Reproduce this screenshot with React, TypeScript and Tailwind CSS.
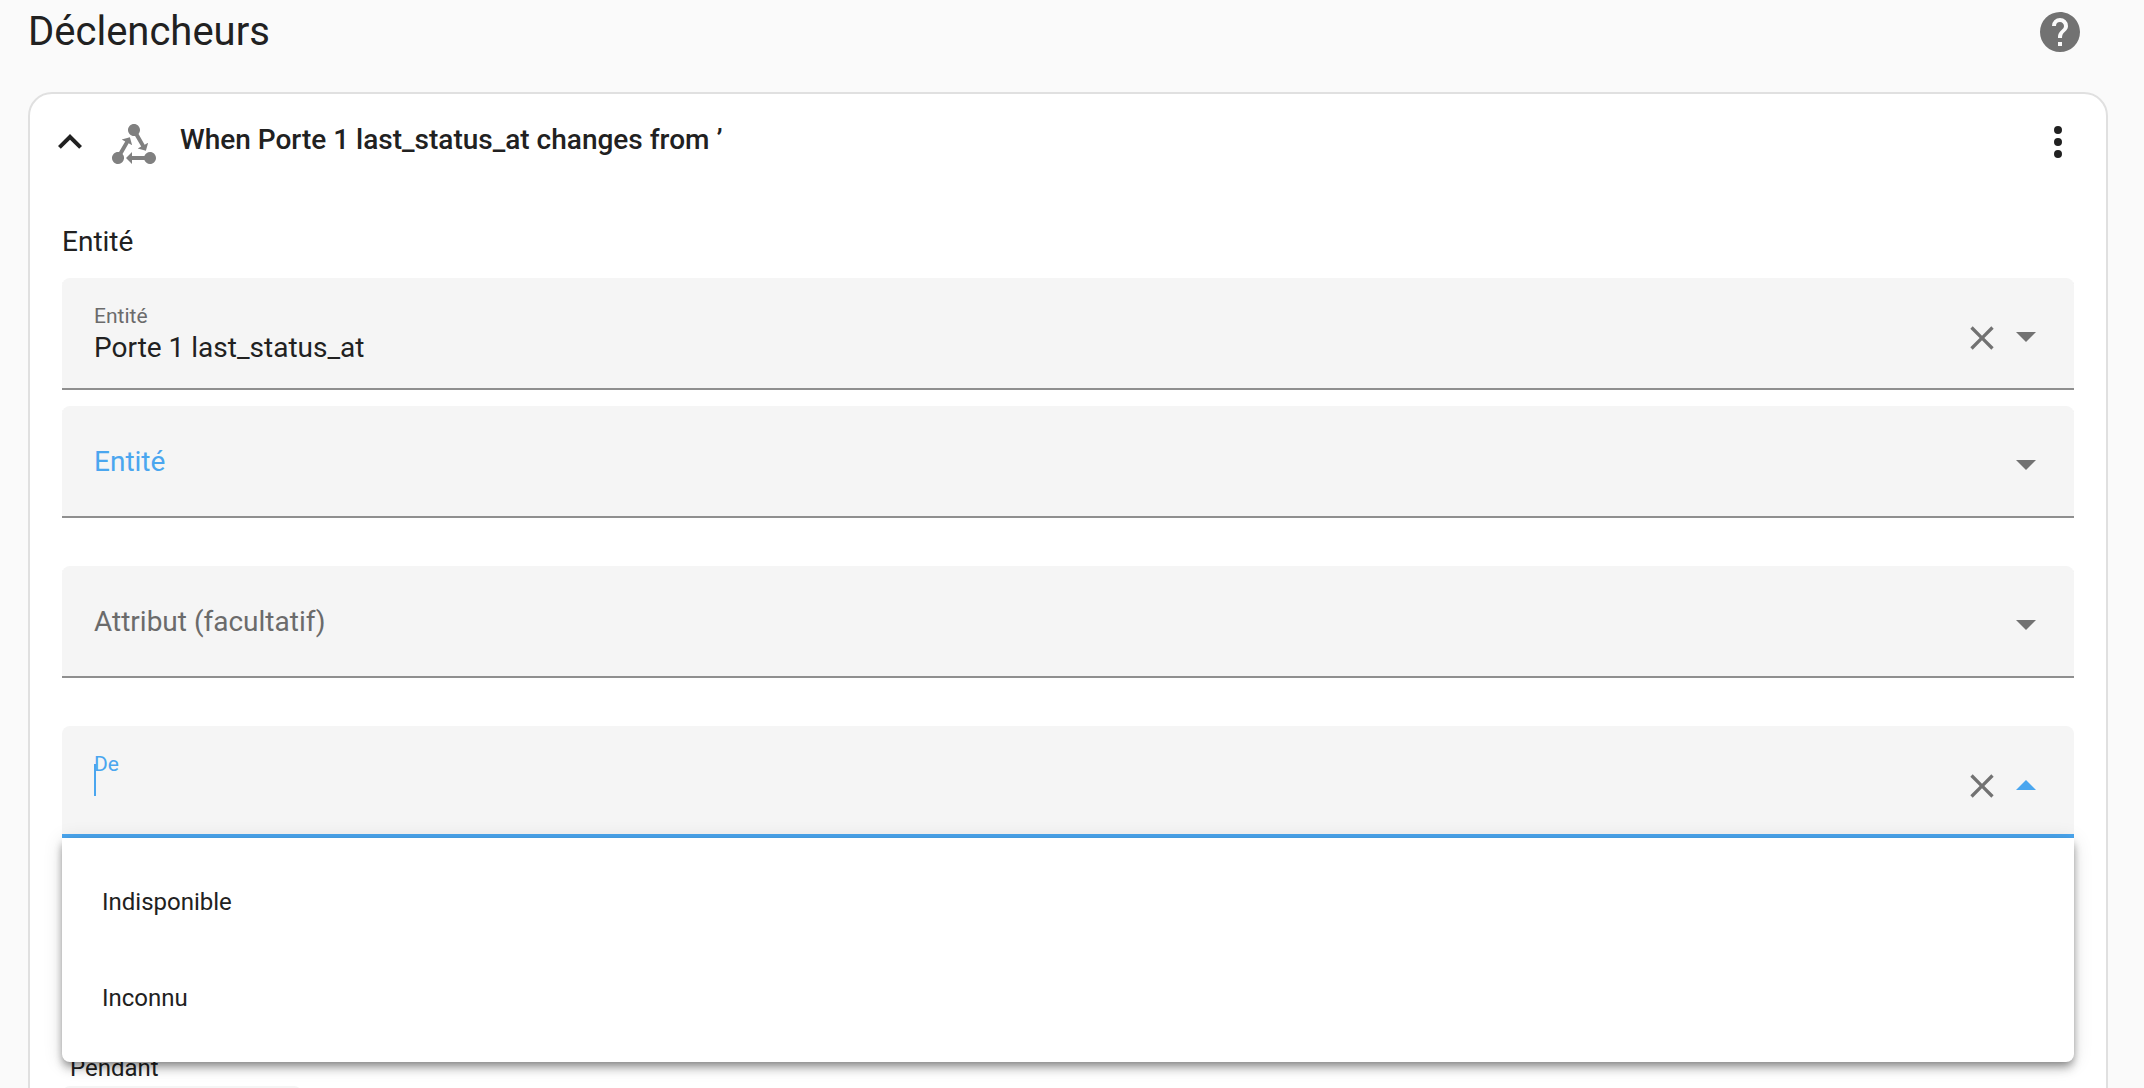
import { useId, type ReactNode } from "react";

const icons = {
  help: "M15.07,11.25L14.17,12.17C13.45,12.89 13,13.5 13,15H11V14.5C11,13.39 11.45,12.39 12.17,11.67L13.41,10.41C13.78,10.05 14,9.55 14,9C14,7.89 13.1,7 12,7A2,2 0 0,0 10,9H8A4,4 0 0,1 12,5A4,4 0 0,1 16,9C16,9.88 15.64,10.67 15.07,11.25M13,19H11V17H13M12,2A10,10 0 0,0 2,12A10,10 0 0,0 12,22A10,10 0 0,0 22,12C22,6.47 17.5,2 12,2Z",
  chevronUp: "M7.41,15.41L12,10.83L16.59,15.41L18,14L12,8L6,14L7.41,15.41Z",
  states:
    "M6.27 17.05A2.991 2.991 0 0 1 4 22C2.34 22 1 20.66 1 19S2.34 16 4 16C4.18 16 4.36 16 4.53 16.05L7.6 10.69L5.86 9.7L9.95 8.58L11.07 12.67L9.33 11.68L6.27 17.05M20 16C18.7 16 17.6 16.84 17.18 18H11V16L8 19L11 22V20H17.18C17.6 21.16 18.7 22 20 22C21.66 22 23 20.66 23 19S21.66 16 20 16M12 8C12.18 8 12.36 8 12.53 7.95L15.6 13.31L13.86 14.3L17.95 15.42L19.07 11.33L17.33 12.32L14.27 6.95C14.72 6.43 15 5.74 15 5C15 3.34 13.66 2 12 2S9 3.34 9 5 10.34 8 12 8Z",
  dots: "M12,16A2,2 0 0,1 14,18A2,2 0 0,1 12,20A2,2 0 0,1 10,18A2,2 0 0,1 12,16M12,10A2,2 0 0,1 14,12A2,2 0 0,1 12,14A2,2 0 0,1 10,12A2,2 0 0,1 12,10M12,4A2,2 0 0,1 14,6A2,2 0 0,1 12,8A2,2 0 0,1 10,6A2,2 0 0,1 12,4Z",
  close:
    "M19,6.41L17.59,5L12,10.59L6.41,5L5,6.41L10.59,12L5,17.59L6.41,19L12,13.41L17.59,19L19,17.59L13.41,12L19,6.41Z",
  menuDown: "M7,10L12,15L17,10H7Z",
  menuUp: "M7,15L12,10L17,15H7Z",
};

function Icon({ name, className }: { name: keyof typeof icons; className: string }) {
  return (
    <svg viewBox="0 0 24 24" fill="currentColor" aria-hidden="true" className={className}>
      <path d={icons[name]} />
    </svg>
  );
}

type ComboProps = {
  label: string;
  value?: string;
  open?: boolean;
  clearable?: boolean;
  accent?: boolean;
  children?: ReactNode;
};

function ComboField({ label, value = "", open = false, clearable = false, accent = false, children }: ComboProps) {
  const id = useId();
  const floating = open || value !== "";
  const labelColor = open || accent ? "text-[#4aa6ef]" : "text-[#6b6b6b]";

  return (
    <div className="relative">
      <div
        className={`flex h-28 items-center rounded-t-lg bg-[#f5f5f5] pl-8 pr-6 ${
          open ? "shadow-[inset_0_-4px_0_#4aa6ef]" : "shadow-[inset_0_-2px_0_#8f8f8f]"
        }`}
      >
        {floating ? (
          <div className="flex min-w-0 flex-1 flex-col pt-1">
            <label htmlFor={id} className={`text-[21px] leading-6 ${labelColor}`}>
              {label}
            </label>
            <div className="relative">
              <input
                id={id}
                type="text"
                role="combobox"
                aria-expanded={open}
                defaultValue={value}
                className="block h-10 w-full bg-transparent text-[28px] text-[#212121] outline-none"
              />
              {open && <span className="absolute -top-3 left-0 h-8 w-0.5 bg-[#4aa6ef]" />}
            </div>
          </div>
        ) : (
          <div className="relative flex-1">
            <label
              htmlFor={id}
              className={`pointer-events-none absolute inset-0 text-[28px] leading-10 ${labelColor}`}
            >
              {label}
            </label>
            <input
              id={id}
              type="text"
              role="combobox"
              aria-expanded={false}
              className="block h-10 w-full bg-transparent text-[28px] text-[#212121] outline-none"
            />
          </div>
        )}
        <div className="flex items-center pt-1">
          {clearable && (
            <button type="button" aria-label="Effacer" className="pt-1 text-[#727272]">
              <Icon name="close" className="size-10" />
            </button>
          )}
          <button
            type="button"
            aria-label={open ? "Fermer la liste" : "Ouvrir la liste"}
            className={open ? "text-[#4aa6ef]" : "text-[#727272]"}
          >
            <Icon name={open ? "menuUp" : "menuDown"} className="size-12" />
          </button>
        </div>
      </div>
      {children}
    </div>
  );
}

export default function App() {
  return (
    <main className="h-screen overflow-hidden bg-[#fafafa] pl-7 pr-9 font-['Roboto',sans-serif] text-[#212121]">
      <header className="flex items-center justify-between pr-6 pt-2">
        <h2 className="text-[40px] leading-12">Déclencheurs</h2>
        <a href="#aide" aria-label="Aide" className="text-[#727272]">
          <Icon name="help" className="size-12" />
        </a>
      </header>

      <section className="mt-9 rounded-3xl border-2 border-[#e0e0e0] bg-white">
        <div className="flex items-center pl-4 pr-6 pt-6">
          <button type="button" aria-label="Réduire" aria-expanded="true">
            <Icon name="chevronUp" className="size-12" />
          </button>
          <Icon name="states" className="ml-4 mt-0.5 -mb-0.5 size-12 text-[#808080]" />
          <h3 className="ml-[22px] flex-1 pb-1 text-[28px] leading-10 font-medium">
            When Porte 1 last_status_at changes from ’
          </h3>
          <button type="button" aria-label="Plus d’options">
            <Icon name="dots" className="size-12" />
          </button>
        </div>

        <div className="mt-14 px-8 pb-16">
          <p className="text-[28px] leading-10">Entité</p>
          <div className="mt-4 flex flex-col gap-12">
            <div className="flex flex-col gap-4">
              <ComboField label="Entité" value="Porte 1 last_status_at" clearable />
              <ComboField label="Entité" accent />
            </div>
            <ComboField label="Attribut (facultatif)" />
            <ComboField label="De" open clearable>
              <ul
                role="listbox"
                aria-label="De"
                className="absolute inset-x-0 top-full z-10 rounded-b-lg bg-white py-4 text-2xl shadow-[0_8px_10px_0_rgba(0,0,0,0.14),0_2px_20px_0_rgba(0,0,0,0.12),0_4px_8px_-2px_rgba(0,0,0,0.4)]"
              >
                <li role="option" aria-selected="false" className="flex h-24 items-center px-10">
                  Indisponible
                </li>
                <li role="option" aria-selected="false" className="flex h-24 items-center px-10">
                  Inconnu
                </li>
              </ul>
            </ComboField>
          </div>

          <label htmlFor="pendant" className="mt-53 block pl-2 text-2xl leading-9">
            Pendant
          </label>
          <input
            id="pendant"
            type="text"
            className="block h-28 w-60 rounded-t-lg border-b-2 border-[#8f8f8f] bg-[#f5f5f5] px-8 text-[28px]"
          />
        </div>
      </section>
    </main>
  );
}
